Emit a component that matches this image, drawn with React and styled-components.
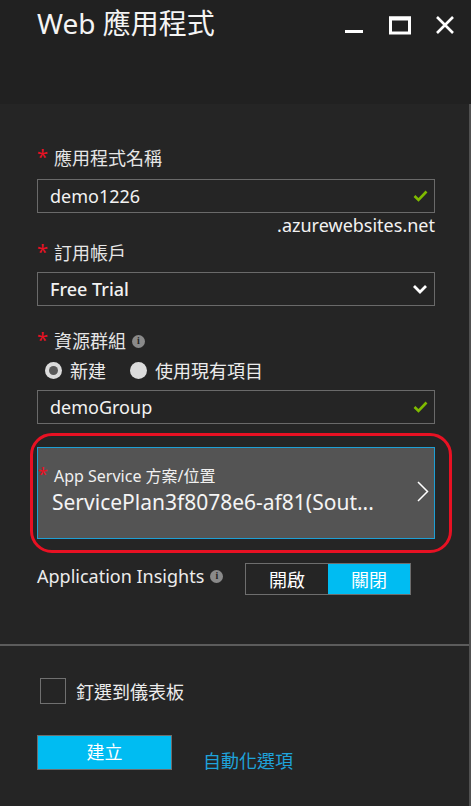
import React, { useState } from 'react';
import styled, { createGlobalStyle } from 'styled-components';

const GlobalStyle = createGlobalStyle`
	html, body {
		margin: 0;
		padding: 0;
		background: #252525;
	}
	body {
		font-family: "Segoe UI", "Noto Sans", "Noto Sans CJK TC", sans-serif;
		color: #f2f2f2;
	}
	* {
		box-sizing: border-box;
	}
`;

function CheckMark() {
	return (
		<svg width="15" height="12" viewBox="0 0 15 12">
			<polyline points="1.5,6 5.5,10 13.5,1.5" fill="none" stroke="#7fba00" strokeWidth="2.6" />
		</svg>
	);
}

function ChevronDown() {
	return (
		<svg width="16" height="10" viewBox="0 0 16 10">
			<polyline points="2,2 8,8 14,2" fill="none" stroke="#fff" strokeWidth="2.8" />
		</svg>
	);
}

function ChevronRight() {
	return (
		<svg width="13" height="21" viewBox="0 0 13 21">
			<polyline points="2,1 11.5,10.5 2,20" fill="none" stroke="#fff" strokeWidth="1.5" />
		</svg>
	);
}

function App() {
	const [mode, setMode] = useState('new');
	const [insights, setInsights] = useState(false);
	const [pinned, setPinned] = useState(false);

	return (
		<>
			<GlobalStyle />
			<Blade>
				<Header>
					<Title>Web 應用程式</Title>
					<WindowButtons>
						<WinButton aria-label="minimize">
							<svg width="18" height="20" viewBox="0 0 18 20">
								<rect x="0" y="14" width="18" height="3" fill="#fff" />
							</svg>
						</WinButton>
						<WinButton aria-label="maximize">
							<svg width="22" height="20" viewBox="0 0 22 20">
								<rect x="1.5" y="2" width="19" height="15" fill="none" stroke="#fff" strokeWidth="3" />
								<rect x="0" y="0.5" width="22" height="4" fill="#fff" />
							</svg>
						</WinButton>
						<WinButton aria-label="close">
							<svg width="18" height="20" viewBox="0 0 18 20">
								<path d="M1 1 L17 17 M17 1 L1 17" stroke="#fff" strokeWidth="2.6" />
							</svg>
						</WinButton>
					</WindowButtons>
				</Header>

				<Body>
					<Form>
						<Label>
							<Star>*</Star>應用程式名稱
						</Label>
						<Field>
							<FieldText>demo1226</FieldText>
							<CheckMark />
						</Field>
						<Suffix>.azurewebsites.net</Suffix>

						<Label $top={4}>
							<Star>*</Star>訂用帳戶
						</Label>
						<Field $top={7}>
							<FieldText $bold>Free Trial</FieldText>
							<ChevronDown />
						</Field>

						<Label $top={23}>
							<Star>*</Star>資源群組
							<Info>i</Info>
						</Label>
						<RadioRow>
							<RadioOption onClick={() => setMode('new')}>
								<Radio $checked={mode === 'new'} />
								新建
							</RadioOption>
							<RadioOption onClick={() => setMode('existing')}>
								<Radio $checked={mode === 'existing'} />
								使用現有項目
							</RadioOption>
						</RadioRow>
						<Field $top={8}>
							<FieldText>demoGroup</FieldText>
							<CheckMark />
						</Field>

						<PlanWrap>
							<PlanBox>
								<PlanText>
									<PlanLabel>
										<PlanStar>*</PlanStar>App Service 方案/位置
									</PlanLabel>
									<PlanValue>ServicePlan3f8078e6-af81(Sout...</PlanValue>
								</PlanText>
								<ChevronRight />
							</PlanBox>
							<Highlight />
						</PlanWrap>

						<InsightsRow>
							<InsightsLabel>
								Application Insights
								<Info>i</Info>
							</InsightsLabel>
							<Toggle>
								<ToggleOption $active={insights} onClick={() => setInsights(true)}>
									開啟
								</ToggleOption>
								<ToggleOption $active={!insights} onClick={() => setInsights(false)}>
									關閉
								</ToggleOption>
							</Toggle>
						</InsightsRow>
					</Form>

					<Divider />

					<Footer>
						<PinRow onClick={() => setPinned(!pinned)}>
							<CheckBox $checked={pinned} />
							釘選到儀表板
						</PinRow>
						<Actions>
							<CreateButton>建立</CreateButton>
							<AutoLink href="#">自動化選項</AutoLink>
						</Actions>
					</Footer>
				</Body>
			</Blade>
		</>
	);
}

const Blade = styled.div`
	width: 471px;
	height: 806px;
	display: flex;
	flex-direction: column;
	background: #252525;
	overflow: hidden;
`;

const Header = styled.div`
	height: 104px;
	flex: none;
	background: #212121;
	display: flex;
	justify-content: space-between;
	align-items: flex-start;
	padding: 4px 17px 0 37px;
`;

const Title = styled.div`
	font-size: 28px;
	line-height: 38px;
	color: #f4f4f4;
`;

const WindowButtons = styled.div`
	display: flex;
	gap: 25px;
	padding-top: 10px;
`;

const WinButton = styled.div`
	display: flex;
	align-items: center;
	height: 24px;
	&:first-child {
		margin-right: 1px;
	}
`;

const Body = styled.div`
	flex: 1;
	display: flex;
	flex-direction: column;
	border-right: 2px solid #505050;
`;

const Form = styled.div`
	display: flex;
	flex-direction: column;
	padding: 42px 34px 0 37px;
`;

const Label = styled.div`
	display: flex;
	align-items: center;
	font-size: 18px;
	line-height: 24px;
	color: #e6e6e6;
	margin-top: ${({ $top }) => ($top ? $top + 'px' : '0')};
`;

const Star = styled.span`
	color: #e81123;
	font-size: 20px;
	width: 17px;
	margin-top: -2px;
`;

const Info = styled.span`
	display: inline-flex;
	align-items: center;
	justify-content: center;
	width: 13px;
	height: 13px;
	border-radius: 50%;
	background: #8a8a8a;
	color: #252525;
	font-size: 10px;
	font-weight: bold;
	line-height: 1;
	margin-left: 6px;
	font-family: "Liberation Serif", serif;
`;

const Field = styled.div`
	height: 34px;
	margin-top: ${({ $top }) => ($top ? $top + 'px' : '9px')};
	border: 1px solid #6a6a6a;
	display: flex;
	align-items: center;
	justify-content: space-between;
	padding: 0 6px 0 12px;
`;

const FieldText = styled.span`
	font-size: 18px;
	color: #f2f2f2;
	font-weight: ${({ $bold }) => ($bold ? 500 : 400)};
`;

const Suffix = styled.div`
	text-align: right;
	font-size: 18px;
	line-height: 24px;
	color: #f2f2f2;
`;

const RadioRow = styled.div`
	display: flex;
	gap: 24px;
	margin-top: 5px;
	padding-left: 8px;
	height: 24px;
	align-items: center;
`;

const RadioOption = styled.label`
	display: flex;
	align-items: center;
	gap: 8px;
	font-size: 18px;
	color: #ececec;
	cursor: pointer;
`;

const Radio = styled.span`
	width: 17px;
	height: 17px;
	border-radius: 50%;
	background: #dcdcdc;
	position: relative;
	&::after {
		content: '';
		display: ${({ $checked }) => ($checked ? 'block' : 'none')};
		position: absolute;
		left: 4px;
		top: 4px;
		width: 9px;
		height: 9px;
		border-radius: 50%;
		background: #5a5a5a;
	}
`;

const PlanWrap = styled.div`
	position: relative;
	margin-top: 23px;
`;

const PlanBox = styled.div`
	height: 92px;
	background: #545454;
	border: 1px solid #1e9fd4;
	display: flex;
	align-items: center;
	justify-content: space-between;
	padding: 0 5px 4px 0;
`;

const PlanText = styled.div`
	display: flex;
	flex-direction: column;
`;

const PlanLabel = styled.div`
	font-size: 16px;
	line-height: 22px;
	color: #f0f0f0;
	padding-left: 16px;
	position: relative;
`;

const PlanStar = styled.span`
	position: absolute;
	left: 0;
	top: -2px;
	color: #e81123;
	font-size: 18px;
`;

const PlanValue = styled.div`
	font-size: 21px;
	line-height: 30px;
	color: #f4f4f4;
	padding-left: 14px;
`;

const Highlight = styled.div`
	position: absolute;
	top: -14px;
	left: -7px;
	right: -17px;
	bottom: -14px;
	border: 3px solid #e81123;
	border-radius: 22px;
	pointer-events: none;
`;

const InsightsRow = styled.div`
	display: flex;
	align-items: center;
	margin-top: 24px;
`;

const InsightsLabel = styled.div`
	display: flex;
	align-items: center;
	font-size: 18px;
	color: #ececec;
	width: 208px;
	margin-top: -6px;
`;

const Toggle = styled.div`
	display: flex;
	border: 1px solid #6e6e6e;
	height: 32px;
`;

const ToggleOption = styled.div`
	width: 82px;
	display: flex;
	align-items: center;
	justify-content: center;
	font-size: 18px;
	color: #fff;
	cursor: pointer;
	background: ${({ $active }) => ($active ? '#00bcf2' : 'transparent')};
`;

const Divider = styled.div`
	height: 2px;
	background: #5c5c5c;
	margin-top: 49px;
`;

const Footer = styled.div`
	display: flex;
	flex-direction: column;
	padding: 32px 34px 0 37px;
`;

const PinRow = styled.label`
	display: flex;
	align-items: center;
	gap: 10px;
	font-size: 18px;
	color: #ececec;
	padding-left: 3px;
	cursor: pointer;
`;

const CheckBox = styled.span`
	width: 26px;
	height: 26px;
	border: 1px solid #707070;
	background: ${({ $checked }) => ($checked ? '#00bcf2' : 'transparent')};
`;

const Actions = styled.div`
	display: flex;
	align-items: flex-end;
	gap: 31px;
	margin-top: 31px;
`;

const CreateButton = styled.button`
	width: 135px;
	height: 35px;
	background: #00bcf2;
	border: 1px solid #6e6e6e;
	color: #fff;
	font-family: inherit;
	font-size: 18px;
	padding: 0 0 4px;
	cursor: pointer;
`;

const AutoLink = styled.a`
	font-size: 18px;
	line-height: 22px;
	color: #1fa3db;
	text-decoration: none;
	margin-bottom: -2px;
`;

export default App;
